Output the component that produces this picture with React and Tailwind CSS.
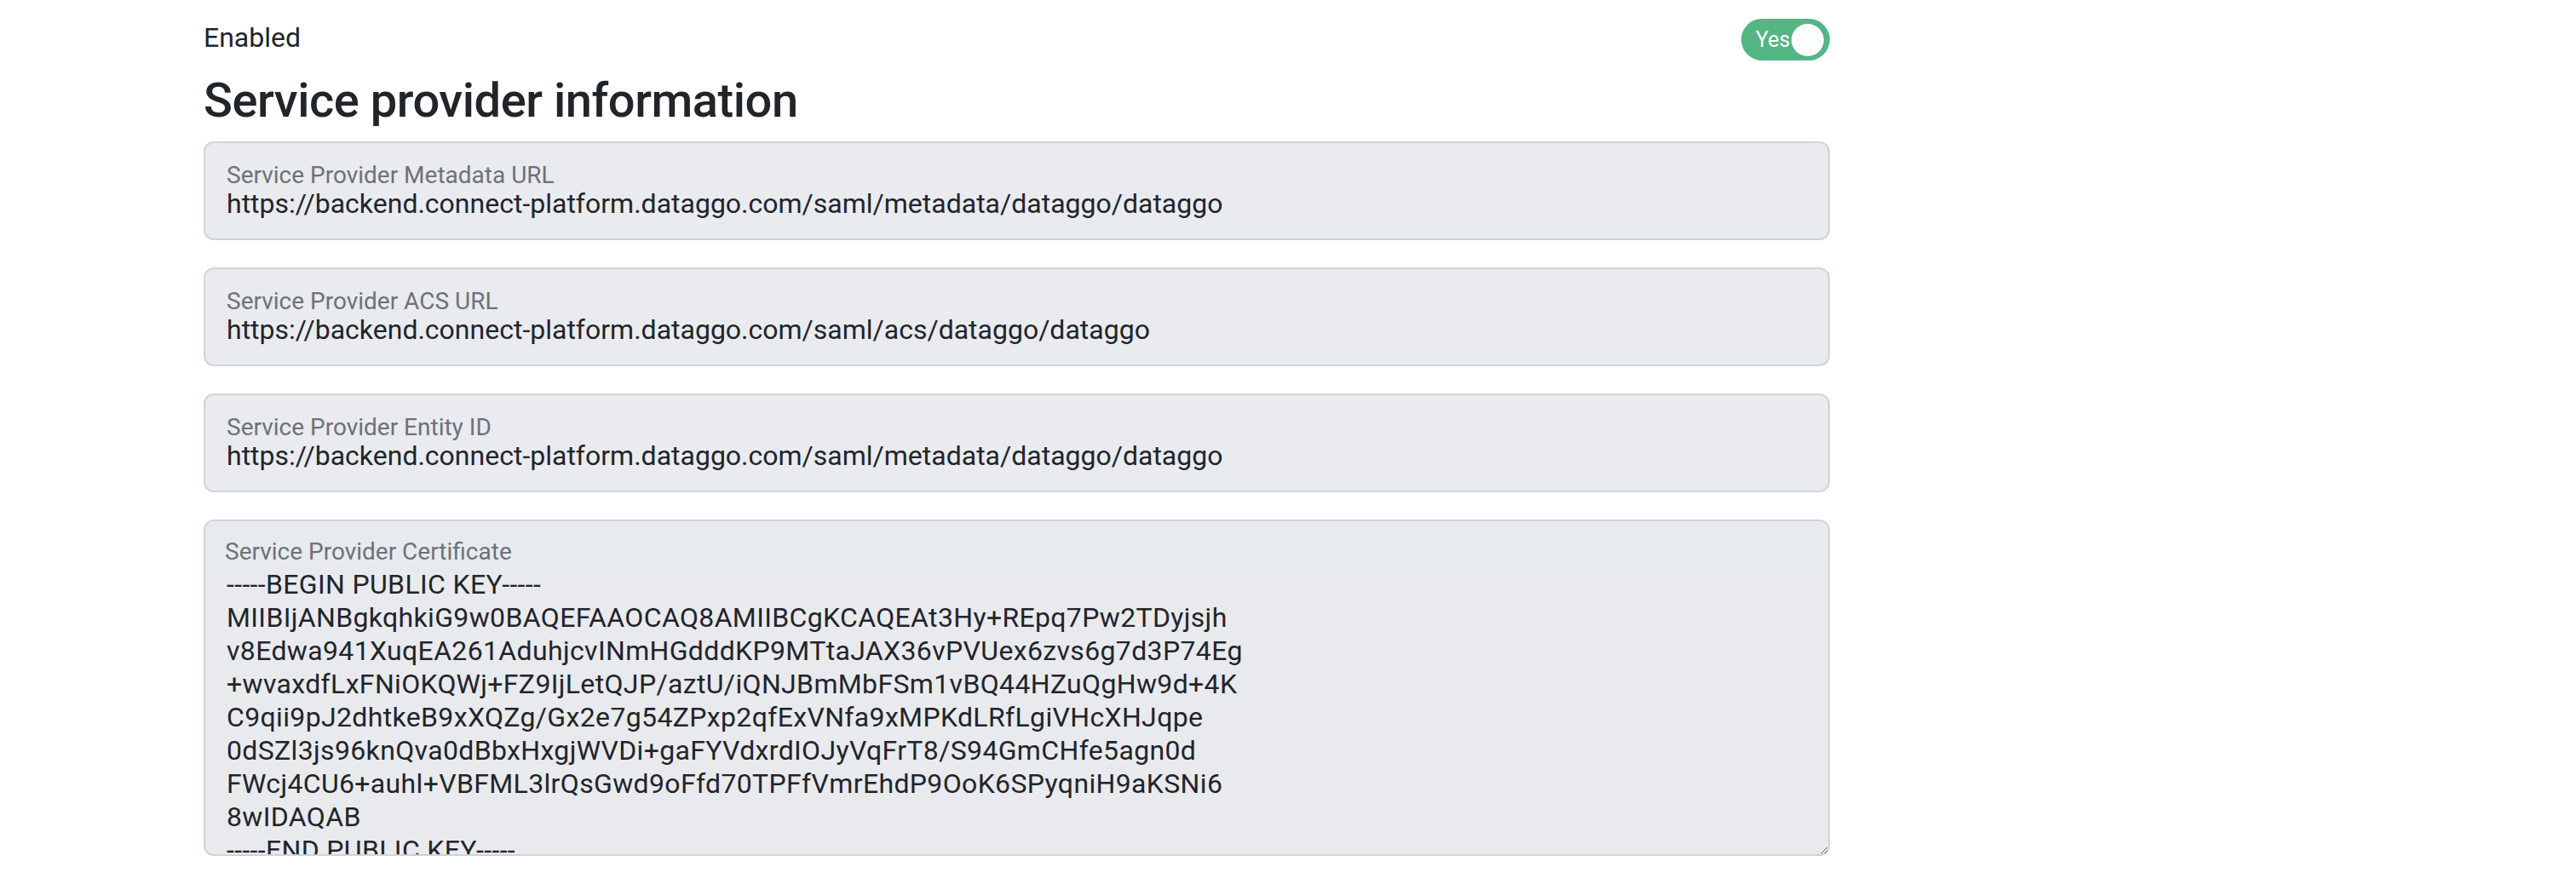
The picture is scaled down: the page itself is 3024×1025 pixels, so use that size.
import { useState } from 'react';

const FIELDS = [
  {
    label: 'Service Provider Metadata URL',
    value: 'https://backend.connect-platform.dataggo.com/saml/metadata/dataggo/dataggo',
  },
  {
    label: 'Service Provider ACS URL',
    value: 'https://backend.connect-platform.dataggo.com/saml/acs/dataggo/dataggo',
  },
  {
    label: 'Service Provider Entity ID',
    value: 'https://backend.connect-platform.dataggo.com/saml/metadata/dataggo/dataggo',
  },
];

const CERT = `-----BEGIN PUBLIC KEY-----
MIIBIjANBgkqhkiG9w0BAQEFAAOCAQ8AMIIBCgKCAQEAt3Hy+REpq7Pw2TDyjsjh
v8Edwa941XuqEA261AduhjcvINmHGdddKP9MTtaJAX36vPVUex6zvs6g7d3P74Eg
+wvaxdfLxFNiOKQWj+FZ9IjLetQJP/aztU/iQNJBmMbFSm1vBQ44HZuQgHw9d+4K
C9qii9pJ2dhtkeB9xXQZg/Gx2e7g54ZPxp2qfExVNfa9xMPKdLRfLgiVHcXHJqpe
0dSZl3js96knQva0dBbxHxgjWVDi+gaFYVdxrdIOJyVqFrT8/S94GmCHfe5agn0d
FWcj4CU6+auhl+VBFML3lrQsGwd9oFfd70TPFfVmrEhdP9OoK6SPyqniH9aKSNi6
8wIDAQAB
-----END PUBLIC KEY-----`;

function Toggle({ on, onChange }) {
  return (
    <button
      onClick={() => onChange(!on)}
      className={`flex items-center w-[104px] h-[49px] rounded-full pl-[17px] pr-[7px] ${
        on ? 'bg-[#54b585]' : 'bg-[#adb5bd]'
      }`}
    >
      <span className="text-[25px] leading-none text-white">{on ? 'Yes' : 'No'}</span>
      <span className="ml-auto w-[38px] h-[38px] rounded-full bg-white" />
    </button>
  );
}

function ReadonlyField({ label, value }) {
  return (
    <div className="h-[116px] rounded-[12px] border-2 border-[#ced4da] bg-[#e9ebef] pl-[25px] pt-[24px]">
      <div className="text-[28px] leading-[27px] text-[#6c7278]">{label}</div>
      <div className="text-[32px] leading-[40px] text-[#212529] whitespace-nowrap">{value}</div>
    </div>
  );
}

export default function App() {
  const [enabled, setEnabled] = useState(true);

  return (
    <div className="min-h-screen bg-white text-[#212529] font-['Roboto','Noto_Sans',sans-serif]">
      <div className="ml-[239px] w-[1909px]">
        <div className="h-[70px] flex items-start justify-between">
          <span className="mt-[20px] text-[32px] leading-[48px]">Enabled</span>
          <div className="mt-[22px]">
            <Toggle on={enabled} onChange={setEnabled} />
          </div>
        </div>

        <h3 className="mt-[15px] mb-[14px] text-[56px] leading-[67px] font-medium tracking-[-0.45px]">
          Service provider information
        </h3>

        <div className="flex flex-col gap-[32px]">
          {FIELDS.map((f) => (
            <ReadonlyField key={f.label} label={f.label} value={f.value} />
          ))}

          {/* certificate */}
          <div className="relative">
            <textarea
              readOnly
              disabled
              wrap="off"
              value={CERT}
              className="block w-full h-[395px] rounded-[12px] border-2 border-[#ced4da] bg-[#e9eaee] pl-[25px] pt-[55px] text-[32px] leading-[39px] tracking-[0.35px] text-[#212529] overflow-hidden resize-y outline-none"
            />
            <div className="absolute top-[2px] left-[2px] right-[2px] h-[51px] rounded-t-[10px] bg-[#e7ebee] pl-[23px] pt-[22px]">
              <span className="block text-[28px] leading-[27px] text-[#6c7278]">Service Provider Certificate</span>
            </div>
          </div>
        </div>
      </div>
    </div>
  );
}
